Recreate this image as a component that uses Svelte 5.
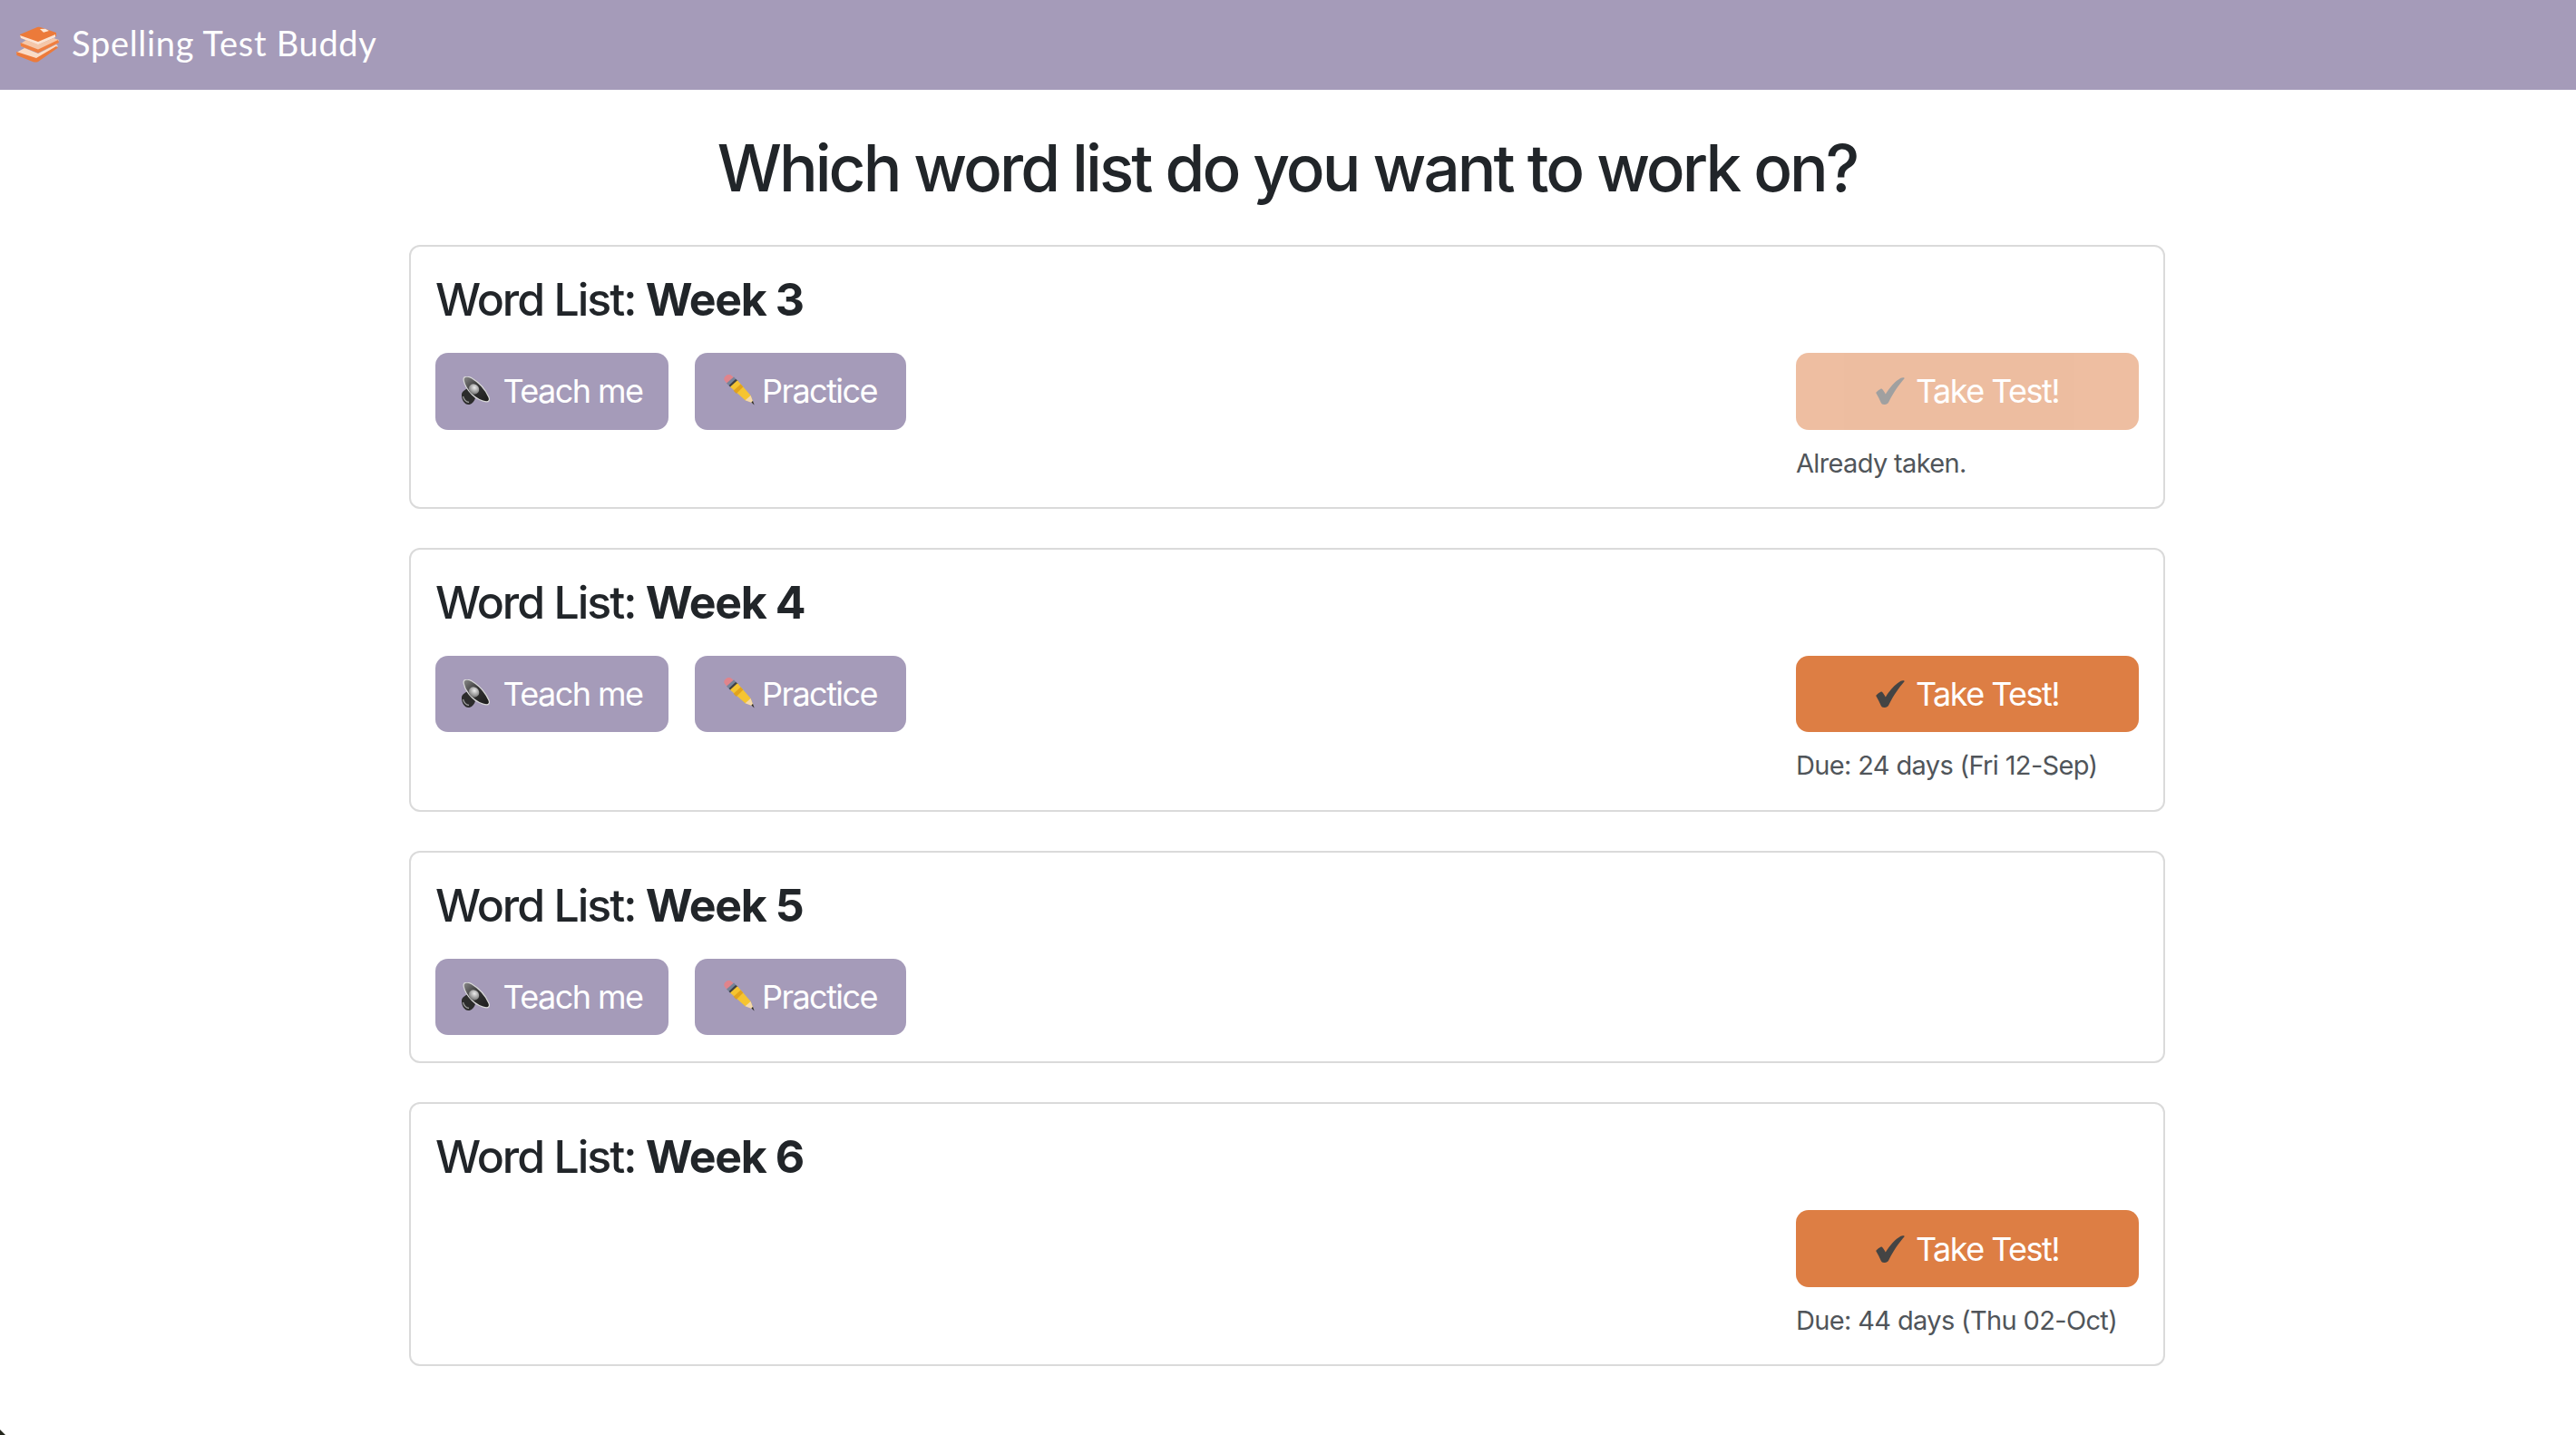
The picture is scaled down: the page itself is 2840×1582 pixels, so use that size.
<script>
  const lists = [
    { week: 3, study: true, test: 'disabled', note: 'Already taken.' },
    { week: 4, study: true, test: 'on', note: 'Due: 24 days (Fri 12-Sep)' },
    { week: 5, study: true, test: null, note: '' },
    { week: 6, study: false, test: 'on', note: 'Due: 44 days (Thu 02-Oct)' }
  ];
</script>

{#snippet speaker()}
  <svg class="speaker" viewBox="0 0 32 32" aria-hidden="true">
    <defs>
      <linearGradient id="cone" x1="0" y1="0" x2="1" y2="1">
        <stop offset="0" stop-color="#8d8d8d" />
        <stop offset="0.45" stop-color="#333" />
        <stop offset="1" stop-color="#1c1c1c" />
      </linearGradient>
      <radialGradient id="dome" cx="0.45" cy="0.35" r="0.7">
        <stop offset="0" stop-color="#ececec" />
        <stop offset="1" stop-color="#6a6a6a" />
      </radialGradient>
    </defs>
    <path d="M1 20 C1 17 4 15 7 13.5 L16 24 C15 27 13 30 9.5 31 C5 32 0.5 26 1 20Z" fill="#2c2c2c" />
    <path d="M2.5 22 C3.5 25.5 6 28 9 28.5" fill="none" stroke="#9a9a9a" stroke-width="1.3" />
    <path d="M3.5 1.5 C5 -0.5 9 0 12 1.8 C19 6 26.5 13 31 23 C32.2 26 31 28 28 27.8 C24 27.5 17 24.5 12.5 20 C8 15.5 4 9 3.2 4.5 C3 3.5 3 2.5 3.5 1.5Z" fill="url(#cone)" stroke="#d8d8d8" stroke-width="1.3" />
    <ellipse cx="14.5" cy="14" rx="6" ry="5.4" transform="rotate(40 14.5 14)" fill="url(#dome)" />
  </svg>
{/snippet}

{#snippet pencil()}
  <svg class="pencil" viewBox="0 0 35 34" aria-hidden="true">
    <path d="M0.8 6.5 C-0.6 4 1.2 2 2.6 1 C4.8 -0.6 7 -0.2 8.4 1 L11.6 3.8 L4 10.6Z" fill="#e0848c" />
    <path d="M3 9.6 L11 2.6 L15.4 6.6 L7.4 14Z" fill="#76849a" />
    <path d="M5.6 12 L13 5 L15.4 6.8 L7.6 14Z" fill="#3f3f44" />
    <path d="M7 13.6 L15 6.2 L29.6 23 L32.4 31 L23.6 28.2Z" fill="#f5c431" />
    <path d="M10.6 17.8 L18.6 10.4 L21.4 13.6 L13.8 21Z" fill="#dd9b16" opacity=".8" />
    <path d="M23.6 28.2 L29.6 23 L32.8 31.8Z" fill="#f4d9ab" />
    <path d="M30.4 30.4 L32 29 L33.6 33.4 Z" fill="#222" />
  </svg>
{/snippet}

{#snippet check()}
  <svg class="check" viewBox="0 0 32 30" aria-hidden="true">
    <path d="M0.2 17 C1.5 15.2 5 12.6 6.4 12.6 C7.6 12.8 9.6 16.4 10.8 18.4 C15.5 10.8 21.5 4 27.6 0.7 C29.2 0 31.6 0 31.8 1 C25.6 8 19 17.5 14.4 27 C13.6 28.8 12.4 29.8 9.6 29.9 C7.4 30 6.4 29.2 5.8 27.9 C4.2 24.4 2.4 20.6 0.2 17Z" fill="currentColor" />
  </svg>
{/snippet}

<nav class="navbar">
  <svg class="logo" viewBox="0 0 48 40" aria-hidden="true">
    <path d="M4 9 L23 1 C25 0.5 26 .5 28 1.5 L44 7 L44 11 L24 20 L5 13Z" fill="#ec7a3a" />
    <path d="M26 3 L32 2.8 L36 5 L30 6.8Z" fill="#fde7d6" />
    <path d="M4 10 L24 17 L43 9 L43 12 L24 20.5 L5 13Z" fill="#fbe4d4" />
    <path d="M5 19 L11 15 L24 20 L41 13 L47 15 L45 19 L24 29 L5 22Z" fill="#f5c7a9" />
    <path d="M4.5 18 L24 25.5 L46 15 L47 18 L24 29.5 L5 22Z" fill="#ef7f40" />
    <path d="M0 29 L9 24 L24 30 L44 20 L46 22 L25 37.5 C23 38.5 21 38 19 37.5 L2 32Z" fill="#fbdcc5" />
    <path d="M0 28 L22 35 L44 22 L46 23.5 L24 39 C22 40 20 39.5 18 39 L0.5 32Z" fill="#ec7a3a" />
  </svg>
  <span class="brand">Spelling Test Buddy</span>
</nav>

<main class="page">
  <h1>Which word list do you want to work on?</h1>
  <div class="lists">
    {#each lists as l}
      <section class="card">
        <h2>Word List: <b>Week {l.week}</b></h2>
        <div class="row">
          <div class="study">
            {#if l.study}
              <button class="btn purple teach">{@render speaker()}Teach me</button>
              <button class="btn purple practice">{@render pencil()}Practice</button>
            {/if}
          </div>
          {#if l.test}
            <div class="test">
              <button class="btn orange" class:disabled={l.test === 'disabled'}>{@render check()}Take Test!</button>
              <p class="note">{l.note}</p>
            </div>
          {/if}
        </div>
      </section>
    {/each}
  </div>
</main>
<div class="corner"></div>

<style>
  :global(body) {
    margin: 0;
    background: #fff;
    font-family: Inter, "Liberation Sans", sans-serif;
    color: #212529;
  }
  .navbar {
    height: 99px;
    background: #a59bb9;
    display: flex;
    align-items: center;
    padding: 0 18px;
    box-sizing: border-box;
  }
  .logo {
    width: 48px;
    height: 40px;
    margin-right: 13px;
    margin-top: -1px;
  }
  .brand {
    font-family: Lato, "Open Sans", sans-serif;
    font-size: 38px;
    letter-spacing: 0.7px;
    color: #fff;
    margin-top: -6px;
  }
  .page {
    width: 1936px;
    margin-left: 451px;
    padding-bottom: 76px;
  }
  h1 {
    margin: 0;
    padding-top: 39px;
    height: 171px;
    box-sizing: border-box;
    text-align: center;
    font-size: 71px;
    line-height: 94px;
    font-weight: 550;
    letter-spacing: -2.95px;
  }
  .lists {
    display: flex;
    flex-direction: column;
    gap: 43.4px;
  }
  .card {
    border: 2px solid #dadada;
    border-radius: 12px;
    padding: 27px 27px 28.6px;
    background: #fff;
  }
  h2 {
    margin: 0 0 27px;
    font-size: 50px;
    line-height: 63px;
    font-weight: 550;
    letter-spacing: -2px;
  }
  h2 b {
    font-weight: 700;
    letter-spacing: -1.35px;
  }
  .row {
    display: flex;
    justify-content: space-between;
    align-items: flex-start;
  }
  .study {
    display: flex;
    gap: 29px;
  }
  .btn {
    display: flex;
    align-items: center;
    justify-content: center;
    height: 84.5px;
    border: 0;
    border-radius: 14px;
    font-family: Inter, "Liberation Sans", sans-serif;
    font-size: 36px;
    color: #fff;
    padding: 0;
    letter-spacing: -1.55px;
  }
  .purple { background: #a59bb9; }
  .teach { width: 257px; }
  .practice { width: 233px; }
  .orange { background: #dd7e44; width: 378px; }
  .orange.disabled { opacity: 0.5; }
  .speaker { width: 32px; height: 32px; margin-right: 14px; }
  .pencil { width: 35px; height: 34px; margin-right: 7px; margin-top: -2px; }
  .check { width: 32px; height: 30px; margin-right: 12px; color: #444; }
  .test { width: 378px; }
  .note {
    margin: 14px 0 -2.5px;
    font-size: 29px;
    line-height: 45px;
    color: #50555a;
    letter-spacing: -0.65px;
    white-space: nowrap;
  }
  .corner {
    position: fixed;
    left: 0;
    bottom: 0;
    width: 6px;
    height: 6px;
    background: #23261c;
    clip-path: polygon(0 0, 100% 100%, 0 100%);
  }
</style>
